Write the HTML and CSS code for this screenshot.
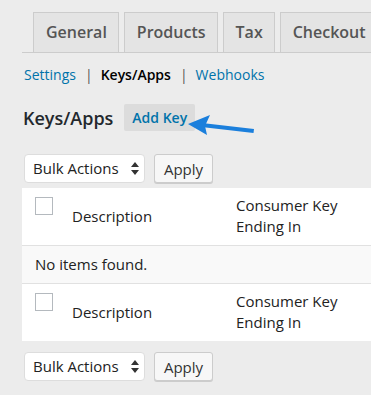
FILE: index.html
```html
<!DOCTYPE html>
<html lang="en">
<head>
<meta charset="UTF-8">
<title>Keys/Apps</title>
<link rel="stylesheet" href="styles.css">
</head>
<body>

<!-- tabs -->
<nav class="nav-tabs">
  <a class="nav-tab" href="#">General</a>
  <a class="nav-tab" href="#">Products</a>
  <a class="nav-tab" href="#">Tax</a>
  <a class="nav-tab" href="#">Checkout</a>
</nav>

<ul class="subsubsub">
  <li><a href="#">Settings</a><span class="sep">|</span></li>
  <li><a class="current" href="#">Keys/Apps</a><span class="sep">|</span></li>
  <li><a href="#">Webhooks</a></li>
</ul>

<div class="title-row">
  <h2>Keys/Apps</h2>
  <a class="add-key" href="#">Add Key</a>
  <svg class="arrow" width="70" height="24" viewBox="0 0 70 24">
    <path d="M14 10 L66 16 L65.5 20 L13.5 14 Z" fill="#1b7fdc"/>
    <path d="M0 11 L22 2 L17 13 L19 22 Z" fill="#1b7fdc"/>
  </svg>
</div>

<div class="tablenav">
  <div class="select">Bulk Actions
    <svg class="updown" width="8" height="13" viewBox="0 0 8 13">
      <path d="M4 0 L8 5 L0 5 Z M0 8 L8 8 L4 13 Z" fill="#333"/>
    </svg>
  </div>
  <button class="btn">Apply</button>
</div>

<table class="list">
  <thead>
    <tr>
      <td class="check"><span class="box"></span></td>
      <th class="desc">Description</th>
      <th class="key">Consumer Key Ending In</th>
      <th class="rest"></th>
    </tr>
  </thead>
  <tbody>
    <tr class="empty">
      <td colspan="4">No items found.</td>
    </tr>
  </tbody>
  <tfoot>
    <tr>
      <td class="check"><span class="box"></span></td>
      <th class="desc">Description</th>
      <th class="key">Consumer Key Ending In</th>
      <th class="rest"></th>
    </tr>
  </tfoot>
</table>

<div class="tablenav bottom">
  <div class="select">Bulk Actions
    <svg class="updown" width="8" height="13" viewBox="0 0 8 13">
      <path d="M4 0 L8 5 L0 5 Z M0 8 L8 8 L4 13 Z" fill="#333"/>
    </svg>
  </div>
  <button class="btn">Apply</button>
</div>

</body>
</html>
```

FILE: styles.css
```css
body {
  margin: 0;
  padding: 12px 0 0 22px;
  background: #ececec;
  font-family: "Open Sans", "Liberation Sans", sans-serif;
  color: #222;
  overflow: hidden;
}

a {
  text-decoration: none;
}

/* tabs */
.nav-tabs {
  display: flex;
  gap: 5px;
  padding-left: 11px;
  border-bottom: 1px solid #ccc;
  white-space: nowrap;
}

.nav-tab {
  display: block;
  padding: 0 11px 0 12px;
  height: 39px;
  line-height: 39px;
  background: #e4e4e4;
  border: 1px solid #ccc;
  border-bottom: none;
  color: #555;
  font-size: 16px;
  font-weight: 600;
}

/* sub links */
.subsubsub {
  list-style: none;
  margin: 12px 0 0 2px;
  padding: 0;
  display: flex;
  font-size: 14px;
  line-height: 20px;
  color: #555;
}

.subsubsub a {
  color: #0073aa;
}

.subsubsub a.current {
  color: #000;
  font-weight: 600;
}

.sep {
  margin: 0 8px 0 9px;
}

/* heading */
.title-row {
  display: flex;
  align-items: center;
  margin-top: 19px;
  position: relative;
}

.title-row h2 {
  margin: 0 0 0 1px;
  font-size: 18px;
  font-weight: 600;
  color: #23282d;
}

.add-key {
  margin-left: 11px;
  padding: 0 8px;
  height: 27px;
  line-height: 27px;
  background: #dcdcdc;
  border-radius: 2px;
  color: #0073aa;
  font-size: 14px;
  font-weight: 600;
}

.arrow {
  position: absolute;
  left: 166px;
  top: 9px;
}

/* bulk actions */
.tablenav {
  display: flex;
  gap: 9px;
  margin: 23px 0 5px 2px;
}

.tablenav.bottom {
  margin-top: 11px;
}

.select {
  width: 121px;
  height: 29px;
  box-sizing: border-box;
  padding-left: 8px;
  background: #fff;
  border: 1px solid #ddd;
  border-radius: 4px;
  font-size: 15px;
  line-height: 27px;
  color: #222;
  position: relative;
}

.updown {
  position: absolute;
  right: 5px;
  top: 7px;
}

.btn {
  width: 59px;
  height: 29px;
  padding: 0;
  background: #f7f7f7;
  border: 1px solid #ccc;
  border-radius: 3px;
  box-shadow: 0 1px 0 #ccc;
  font-family: inherit;
  font-size: 15px;
  color: #333;
}

/* table */
.list {
  width: 560px;
  border-collapse: collapse;
  background: #fff;
  font-size: 15px;
}

.list th {
  text-align: left;
  font-weight: 400;
}

.list thead tr {
  border-bottom: 1px solid #e1e1e1;
}

.list tfoot tr {
  border-top: 1px solid #e1e1e1;
}

.list td, .list th {
  padding: 7px 10px 8px;
  line-height: 21px;
}

.check {
  width: 27px;
  vertical-align: top;
}

.list td.check {
  padding: 9px 0 0 13px;
}

.box {
  display: block;
  width: 16px;
  height: 16px;
  border: 1px solid #b4b9be;
}

.desc {
  width: 144px;
  padding-top: 14px;
}

.key {
  width: 110px;
}

.empty td {
  background: #f9f9f9;
  padding: 8px 13px;
}
```
